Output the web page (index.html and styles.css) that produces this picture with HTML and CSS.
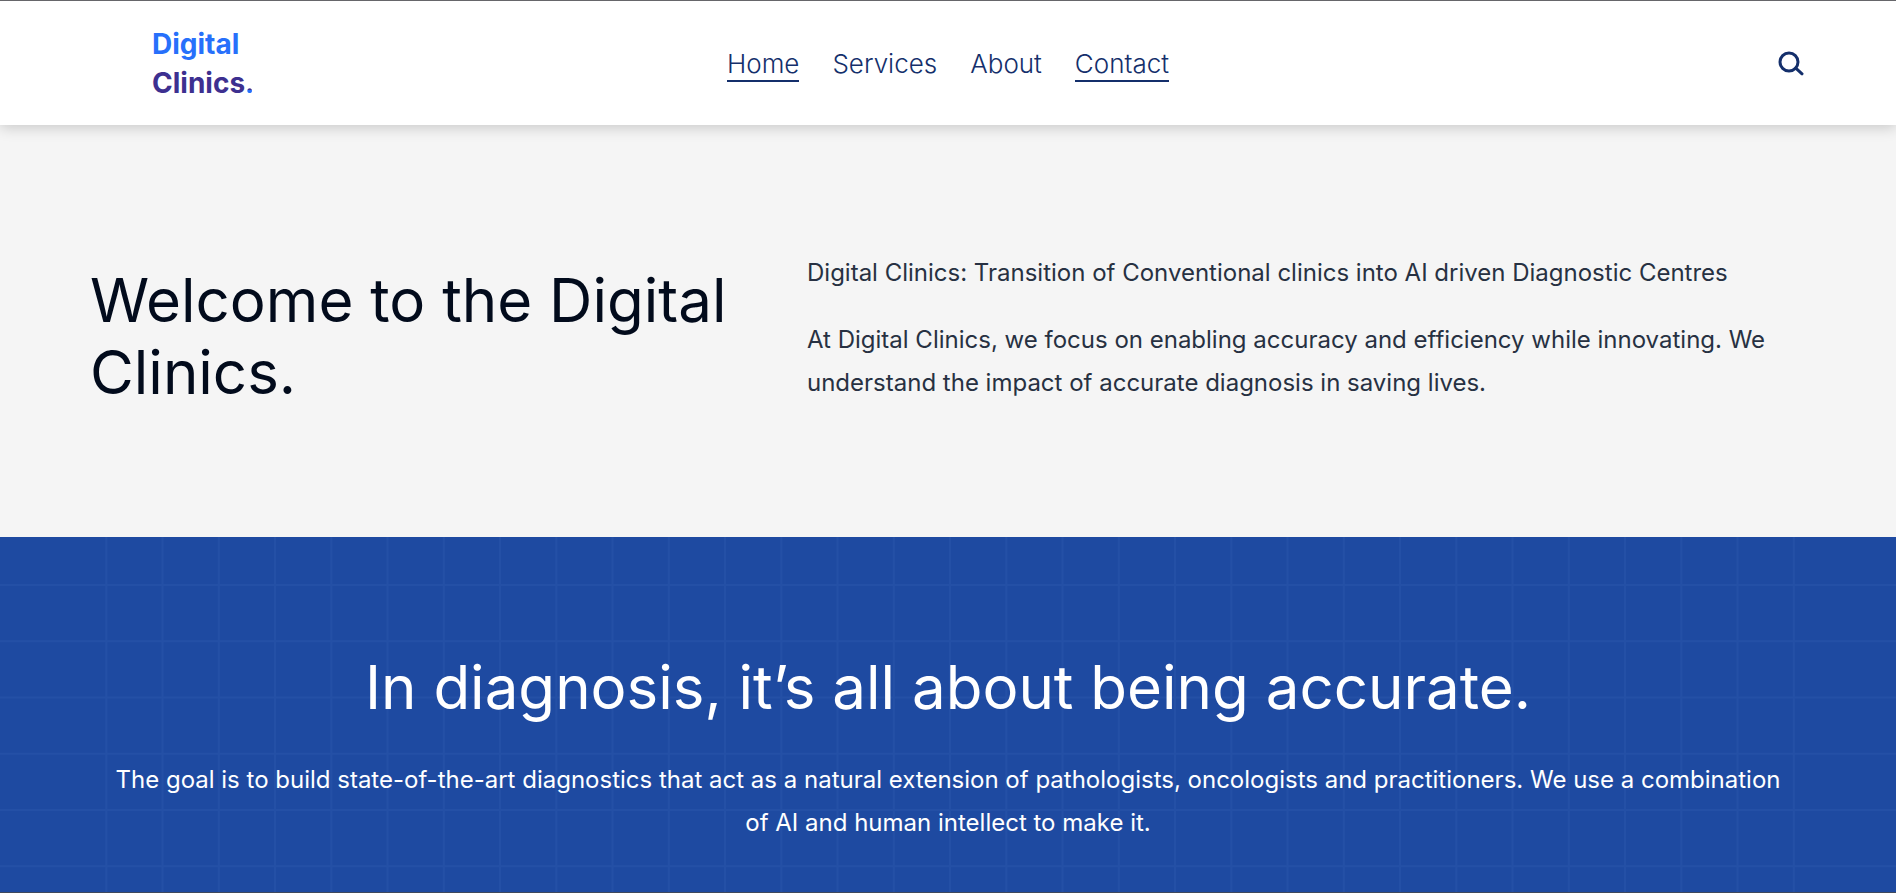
FILE: index.html
```html
<!DOCTYPE html>
<html lang="en">
<head>
<meta charset="utf-8">
<meta name="viewport" content="width=device-width, initial-scale=1">
<title>Digital Clinics</title>
<link rel="stylesheet" href="styles.css">
</head>
<body>
<header class="site-header">
  <a class="logo" href="#"><span class="logo-top">Digital</span><span class="logo-bottom">Clinics<span class="logo-dot">.</span></span></a>
  <nav class="nav" aria-label="Main">
    <a class="nav-link active" href="#">Home</a>
    <a class="nav-link" href="#">Services</a>
    <a class="nav-link" href="#">About</a>
    <a class="nav-link active" href="#">Contact</a>
  </nav>
  <button class="search" type="button" aria-label="Search">
    <svg width="26" height="26" viewBox="0 0 26 26" fill="none" stroke="currentColor" stroke-width="3" stroke-linecap="round"><circle cx="11" cy="11" r="9"/><path d="M17.8 17.2 24 22.8"/></svg>
  </button>
</header>
<main>
  <section class="hero">
    <h1 class="title hero-title">Welcome to the Digital Clinics.</h1>
    <div class="copy">
      <p>Digital Clinics: Transition of Conventional clinics into AI driven Diagnostic Centres</p>
      <p>At Digital Clinics, we focus on enabling accuracy and efficiency while innovating. We understand the impact of accurate diagnosis in saving lives.</p>
    </div>
  </section>
  <section class="banner">
    <svg class="banner-grid" viewBox="0 0 1896 355" preserveAspectRatio="xMidYMin slice" aria-hidden="true">
      <defs><pattern id="v" x="105.3" y="0" width="56.25" height="355" patternUnits="userSpaceOnUse"><path d="M1 0V355"/></pattern>
      <pattern id="h" x="0" y="47" width="1896" height="56.25" patternUnits="userSpaceOnUse"><path d="M0 1H1896"/></pattern></defs>
      <rect x="105" width="1691" height="355" fill="url(#v)"/>
      <rect y="46" width="1896" height="309" fill="url(#h)"/>
    </svg>
    <h2 class="title banner-title">In diagnosis, it’s all about being accurate.</h2>
    <p class="banner-text">The goal is to build state-of-the-art diagnostics that act as a natural extension of pathologists, oncologists and practitioners. We use a combination of AI and human intellect to make it.</p>
  </section>
</main>
</body>
</html>
```
FILE: styles.css
```css
* {
  box-sizing: border-box;
}

body {
  margin: 0;
  min-height: 100vh;
  display: flex;
  flex-direction: column;
  background: #f5f5f5;
  color: #273142;
  font-family: "Inter", "Liberation Sans", sans-serif;
}

main {
  flex: 1;
  display: flex;
  flex-direction: column;
}

.site-header {
  position: relative;
  display: grid;
  grid-template-columns: 1fr auto 1fr;
  align-items: center;
  padding: 24px 92px 22px;
  border-top: 1px solid #66666a;
  background: #fff;
  box-shadow: 0 2px 14px rgba(0, 0, 0, 0.2);
}

.logo {
  display: flex;
  flex-direction: column;
  justify-self: start;
  margin-left: 60px;
  color: #3d3090;
  font-size: 28px;
  font-weight: 700;
  line-height: 39px;
  text-decoration: none;
}

.logo-top {
  color: #2770fb;
}

.logo-dot {
  background: linear-gradient(#3d3090 72%, #2770fb 72%);
  background-clip: text;
  color: transparent;
}

.nav {
  display: flex;
  gap: 33px;
  margin-top: 2px;
}

.nav-link {
  border-bottom: 2px solid transparent;
  color: #142f6b;
  font-size: 26px;
  font-weight: 300;
  line-height: 32px;
  text-decoration: none;
}

.nav-link.active {
  border-color: #142f6b;
}

.search {
  justify-self: end;
  display: flex;
  padding: 0;
  border: 0;
  background: none;
  color: #142f6b;
}

.hero {
  display: grid;
  grid-template-columns: 653px 1fr;
  gap: 64px;
  align-items: start;
  padding: 126px 90px 129px;
}

.title {
  margin: 0;
  font-size: 60px;
  font-weight: 400;
  line-height: 72px;
}

.hero-title {
  margin-top: 13px;
  color: #020b1c;
}

.copy {
  display: grid;
  gap: 24px;
  font-size: 24px;
  line-height: 43px;
}

.copy p {
  margin: 0;
}

.banner {
  position: relative;
  flex: 1;
  padding: 114px 90px 40px;
  border-bottom: 1px solid #40495c;
  background: #1e4aa1;
  color: #fff;
  text-align: center;
}

.banner-grid {
  position: absolute;
  inset: 0;
  width: 100%;
  height: 100%;
  stroke: #2450a6;
  stroke-width: 2;
}

.banner-grid rect {
  stroke: none;
}

.banner-title,
.banner-text {
  position: relative;
}

.banner-text {
  margin: 35px 0 0;
  padding: 0 16px;
  font-size: 24px;
  line-height: 43px;
}
```
